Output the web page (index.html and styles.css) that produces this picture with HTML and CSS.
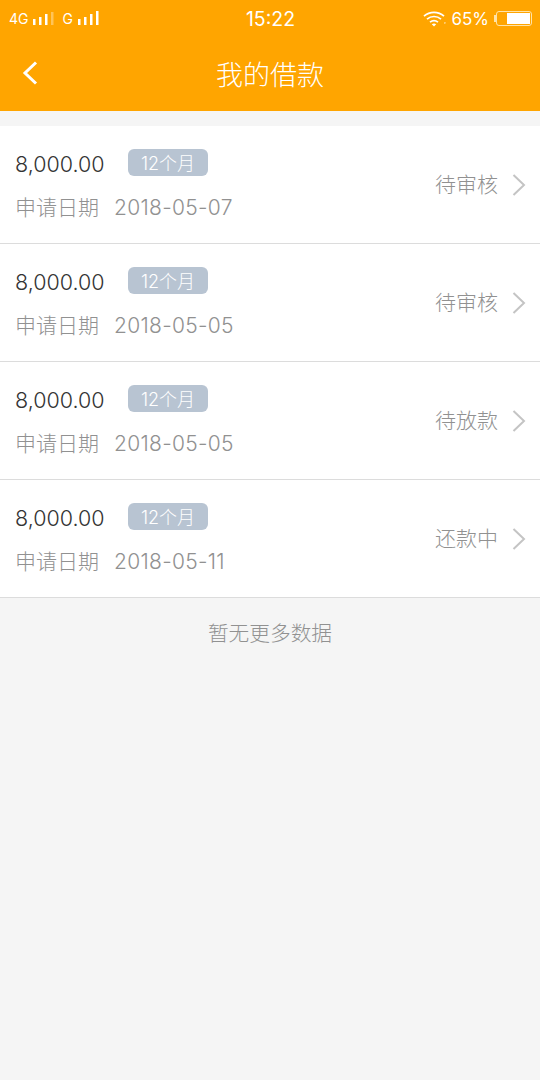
FILE: index.html
```html
<!DOCTYPE html>
<html lang="zh-CN">
<head>
    <meta charset="UTF-8">
    <title>我的借款</title>
    <link rel="stylesheet" href="styles.css">
</head>
<body>
    <!-- Orange header with status bar -->
    <div class="header">
        <div class="status-bar">
            <div class="status-left">
                <span class="net">4G</span>
                <svg class="signal" width="22" height="15" viewBox="0 0 22 15"><g fill="#fff"><rect x="0" y="8" width="2.500" height="6"/><rect x="6" y="6" width="2.500" height="8"/><rect x="12" y="3" width="2.500" height="11"/><rect x="18" y="1" width="2.500" height="13" opacity=".35"/></g></svg>
                <span class="net net-g">G</span>
                <svg class="signal" width="22" height="15" viewBox="0 0 22 15"><g fill="#fff"><rect x="0" y="8" width="2.500" height="6"/><rect x="6" y="6" width="2.500" height="8"/><rect x="12" y="3" width="2.500" height="11"/><rect x="18" y="0" width="2.500" height="14"/></g></svg>
            </div>
            <div class="status-time">15:22</div>
            <div class="status-right">
                <svg class="wifi" width="24" height="17" viewBox="0 0 24 17" fill="none" stroke="#fff" stroke-width="1.7"><path d="M1 6.200C6.600 1 15.400 1 21 6.200"/><path d="M4 9.200C8 5.600 14 5.600 18 9.200"/><path d="M7 12.200C9.400 10.200 12.600 10.200 15 12.200"/><path d="M11 16.500L8.800 14.200C10.100 13.200 11.900 13.200 13.200 14.200Z" fill="#fff" stroke="none"/><path d="M21 12.500l1.800 0-.9 1.400z" fill="#fff" stroke="none"/></svg>
                <span class="battery-text">65%</span>
                <div class="battery-tip"></div>
                <div class="battery"><div class="battery-level"></div></div>
            </div>
        </div>
        <div class="title-bar">
            <svg class="back" width="18" height="26" viewBox="0 0 18 26" fill="none" stroke="#fff" stroke-width="3"><path d="M15 2.500L4 13l11 10.500"/></svg>
            <div class="title">我的借款</div>
        </div>
    </div>

    <!-- Loan list -->
    <div class="loan-list">
        <div class="loan-item">
            <div class="loan-info">
                <div class="loan-top"><span class="amount">8,000.00</span><span class="term">12个月</span></div>
                <div class="loan-date"><span>申请日期</span><span>2018-05-07</span></div>
            </div>
            <div class="loan-status">待审核</div>
            <svg class="arrow" width="14" height="22" viewBox="0 0 14 22" fill="none" stroke="#c4c4c4" stroke-width="2"><path d="M1.500 1L12 11 1.500 21"/></svg>
        </div>
        <div class="loan-item">
            <div class="loan-info">
                <div class="loan-top"><span class="amount">8,000.00</span><span class="term">12个月</span></div>
                <div class="loan-date"><span>申请日期</span><span>2018-05-05</span></div>
            </div>
            <div class="loan-status">待审核</div>
            <svg class="arrow" width="14" height="22" viewBox="0 0 14 22" fill="none" stroke="#c4c4c4" stroke-width="2"><path d="M1.500 1L12 11 1.500 21"/></svg>
        </div>
        <div class="loan-item">
            <div class="loan-info">
                <div class="loan-top"><span class="amount">8,000.00</span><span class="term">12个月</span></div>
                <div class="loan-date"><span>申请日期</span><span>2018-05-05</span></div>
            </div>
            <div class="loan-status">待放款</div>
            <svg class="arrow" width="14" height="22" viewBox="0 0 14 22" fill="none" stroke="#c4c4c4" stroke-width="2"><path d="M1.500 1L12 11 1.500 21"/></svg>
        </div>
        <div class="loan-item">
            <div class="loan-info">
                <div class="loan-top"><span class="amount">8,000.00</span><span class="term">12个月</span></div>
                <div class="loan-date"><span>申请日期</span><span>2018-05-11</span></div>
            </div>
            <div class="loan-status">还款中</div>
            <svg class="arrow" width="14" height="22" viewBox="0 0 14 22" fill="none" stroke="#c4c4c4" stroke-width="2"><path d="M1.500 1L12 11 1.500 21"/></svg>
        </div>
    </div>

    <div class="no-more">暂无更多数据</div>
</body>
</html>
```

FILE: styles.css
```css
* {
    box-sizing: border-box;
}

body {
    margin: 0;
    height: 1080px;
    overflow: hidden;
    background-color: #f5f5f5;
    font-family: "Inter", "Noto Sans CJK SC", sans-serif;
    font-weight: 300;
}

/* Header */
.header {
    height: 111px;
    background-color: #ffa500;
    color: #ffffff;
}

.status-bar {
    height: 37px;
    display: flex;
    align-items: center;
    justify-content: space-between;
    padding: 0 8px 0 9px;
}

.status-left,
.status-right {
    width: 170px;
    display: flex;
    align-items: center;
}

.status-right {
    justify-content: flex-end;
}

.net {
    font-size: 14px;
    font-weight: 400;
    margin-right: 4px;
}

.net-g {
    margin-left: 8px;
    margin-right: 5px;
}

.status-time {
    font-size: 19.500px;
    font-weight: 400;
}

.wifi {
    margin-right: 4px;
}

.battery-text {
    font-size: 17px;
    font-weight: 400;
    margin-right: 5px;
}

.battery-tip {
    width: 2px;
    height: 7px;
    background-color: #ffe3a8;
}

.battery {
    width: 36px;
    height: 15px;
    border: 1px solid #ffe3a8;
    border-radius: 3px;
    padding: 1px;
    display: flex;
    justify-content: flex-end;
}

.battery-level {
    width: 23px;
    background-color: #ffffff;
}

.title-bar {
    height: 74px;
    position: relative;
    display: flex;
    align-items: center;
    justify-content: center;
}

.back {
    position: absolute;
    left: 21px;
    top: 23px;
}

.title {
    font-size: 27px;
    line-height: 40px;
    padding-top: 4px;
}

/* Loan list */
.loan-list {
    margin-top: 15px;
    background-color: #ffffff;
}

.loan-item {
    height: 118px;
    display: flex;
    align-items: center;
    padding: 0 14px 0 15px;
    border-bottom: 1px solid #dcdcdc;
}

.loan-info {
    flex: 1;
    padding-top: 2px;
}

.loan-top {
    display: flex;
    align-items: center;
    height: 28px;
    margin-bottom: 17px;
    padding-top: 1px;
}

.amount {
    width: 113px;
    font-size: 21.500px;
    line-height: 28px;
    color: #333333;
    padding-top: 2px;
}

.term {
    width: 80px;
    height: 27px;
    line-height: 29px;
    text-align: center;
    font-size: 18px;
    color: #ffffff;
    background-color: #b8c4d2;
    border-radius: 6px;
}

.loan-date {
    display: flex;
    align-items: center;
    gap: 15px;
    font-size: 21px;
    line-height: 30px;
    color: #919191;
}

.loan-date span:last-child {
    letter-spacing: 0.300px;
}

.loan-status {
    font-size: 21px;
    line-height: 28px;
    padding-top: 1px;
    color: #919191;
    margin-right: 14px;
}

/* Footer note */
.no-more {
    margin-top: 19px;
    text-align: center;
    font-size: 20.700px;
    color: #919191;
}
```
